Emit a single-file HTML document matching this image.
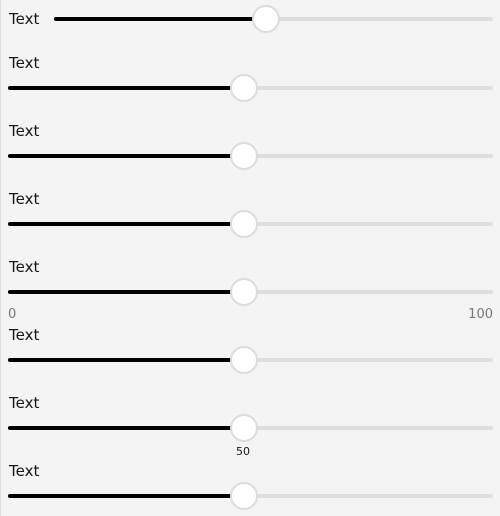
<!DOCTYPE html>
<html><head><style>
html,body{margin:0;padding:0;}
body{width:500px;height:516px;background:#f4f4f4;position:relative;overflow:hidden;font-family:"DejaVu Sans","Liberation Sans",sans-serif;color:#161616;}
.bl{position:absolute;left:0;top:0;width:1px;height:516px;background:#e0e0e0;}
.t{position:absolute;font-size:15px;line-height:16px;}
.tr{position:absolute;height:4px;border-radius:2px;background:#dedede;}
.f{position:absolute;height:4px;border-radius:2px;background:#000;}
.th{position:absolute;width:24px;height:24px;border-radius:50%;background:#fff;border:2px solid #dcdcdc;}
.s{position:absolute;font-size:13px;color:#777;}
</style></head><body>
<div class="bl"></div>
<div class="t" style="left:9px;top:11px">Text</div>
<div class="tr" style="left:54px;width:439px;top:17px"></div>
<div class="f" style="left:54px;width:210px;top:17px"></div>
<div class="th" style="left:252px;top:5px"></div>

<div class="t" style="left:9px;top:55px">Text</div>
<div class="tr" style="left:8px;width:485px;top:86px"></div>
<div class="f" style="left:8px;width:234px;top:86px"></div>
<div class="th" style="left:230px;top:74px"></div>

<div class="t" style="left:9px;top:123px">Text</div>
<div class="tr" style="left:8px;width:485px;top:154px"></div>
<div class="f" style="left:8px;width:234px;top:154px"></div>
<div class="th" style="left:230px;top:142px"></div>

<div class="t" style="left:9px;top:191px">Text</div>
<div class="tr" style="left:8px;width:485px;top:222px"></div>
<div class="f" style="left:8px;width:234px;top:222px"></div>
<div class="th" style="left:230px;top:210px"></div>

<div class="t" style="left:9px;top:259px">Text</div>
<div class="tr" style="left:8px;width:485px;top:290px"></div>
<div class="f" style="left:8px;width:234px;top:290px"></div>
<div class="th" style="left:230px;top:278px"></div>
<div class="s" style="left:8px;top:307px">0</div>
<div class="s" style="right:7px;top:307px">100</div>

<div class="t" style="left:9px;top:327px">Text</div>
<div class="tr" style="left:8px;width:485px;top:358px"></div>
<div class="f" style="left:8px;width:234px;top:358px"></div>
<div class="th" style="left:230px;top:346px"></div>

<div class="t" style="left:9px;top:395px">Text</div>
<div class="tr" style="left:8px;width:485px;top:426px"></div>
<div class="f" style="left:8px;width:234px;top:426px"></div>
<div class="th" style="left:230px;top:414px"></div>
<div class="s" style="left:232px;top:445px;font-size:11px;color:#161616;width:22px;text-align:center">50</div>

<div class="t" style="left:9px;top:463px">Text</div>
<div class="tr" style="left:8px;width:485px;top:494px"></div>
<div class="f" style="left:8px;width:234px;top:494px"></div>
<div class="th" style="left:230px;top:482px"></div>
</body></html>
